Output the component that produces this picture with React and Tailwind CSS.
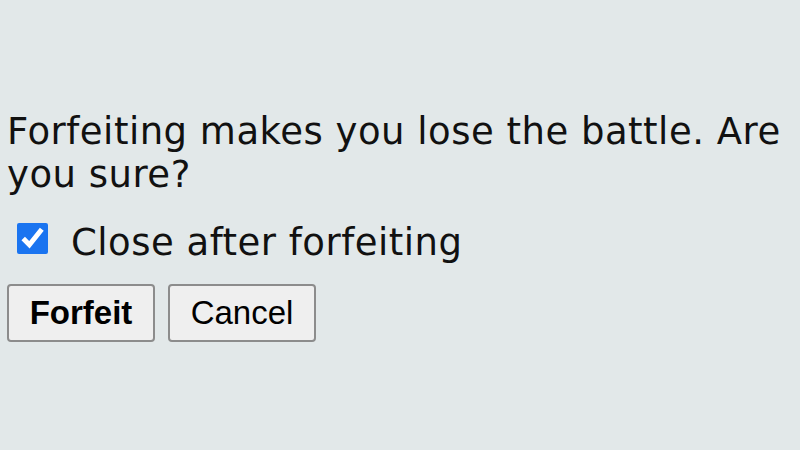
import React, { useState } from "react";

const App = () => {
  const [closeAfter, setCloseAfter] = useState(true);

  return (
    <div className="w-[800px] h-[450px] bg-[#e2e8e9] pt-[110px] font-['DejaVu_Sans',Verdana,sans-serif] text-[#111]">
      {/* message */}
      <p className="pl-[7px] pr-[8px] text-[37px] leading-[43px] tracking-[0.5px]">
        Forfeiting makes you lose the battle. Are you sure?
      </p>

      {/* checkbox */}
      <label className="flex items-start mt-[25px] pl-[17px] text-[37px] leading-[43px] tracking-[0.5px]">
        <input
          type="checkbox"
          checked={closeAfter}
          onChange={(e) => setCloseAfter(e.target.checked)}
          className="w-[31px] h-[31px] mt-[2px] m-0 accent-[#1a74f0] shrink-0"
        />
        <span className="ml-[23px]">Close after forfeiting</span>
      </label>

      {/* buttons */}
      <div className="flex gap-[13px] mt-[20px] pl-[7px] font-['Liberation_Sans',Arial,sans-serif]">
        <button className="w-[148px] h-[58px] bg-[#efefef] border-2 border-[#8c8c8c] rounded-[4px] text-[33px] font-bold text-black">
          Forfeit
        </button>
        <button className="w-[148px] h-[58px] bg-[#efefef] border-2 border-[#8c8c8c] rounded-[4px] text-[33px] text-black">
          Cancel
        </button>
      </div>
    </div>
  );
};

export default App;
